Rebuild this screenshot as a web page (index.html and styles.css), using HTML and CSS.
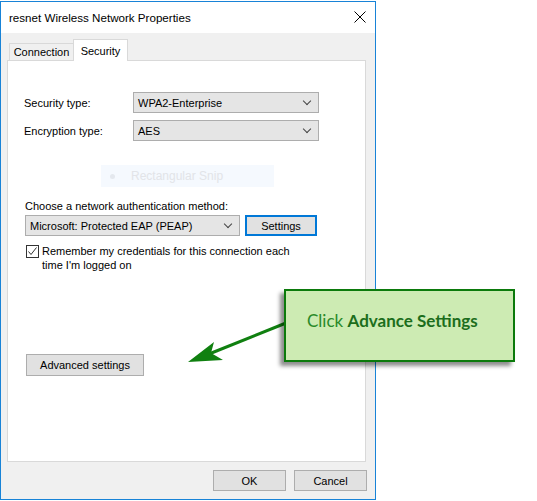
FILE: index.html
```html
<!DOCTYPE html>
<html lang="en">
<head>
<meta charset="UTF-8" />
<meta name="viewport" content="width=device-width, initial-scale=1" />
<title>resnet Wireless Network Properties</title>
<link rel="stylesheet" href="styles.css">
</head>
<body>

<div class="window">
  <div class="titlebar">
    <span class="title">resnet Wireless Network Properties</span>
    <svg class="close" width="12" height="12" viewBox="0 0 12 12">
      <path d="M0.5 0.5 L11.5 11.5 M11.5 0.5 L0.5 11.5" stroke="#000" stroke-width="1" fill="none" />
    </svg>
  </div>

  <div class="dialog">
    <div class="tabs">
      <div class="tab">Connection</div>
      <div class="tab active">Security</div>
    </div>

    <div class="panel">
      <div class="field">
        <label class="field-label">Security type:</label>
        <div class="combo wide"><span>WPA2-Enterprise</span><span class="chev"></span></div>
      </div>
      <div class="field second">
        <label class="field-label">Encryption type:</label>
        <div class="combo wide"><span>AES</span><span class="chev"></span></div>
      </div>

      <div class="snip-ghost">
        <span class="snip-dot"></span>
        <span>Rectangular Snip</span>
      </div>

      <div class="auth">
        <div class="auth-label">Choose a network authentication method:</div>
        <div class="auth-row">
          <div class="combo method"><span>Microsoft: Protected EAP (PEAP)</span><span class="chev"></span></div>
          <button class="btn focused">Settings</button>
        </div>
        <div class="check-row">
          <span class="checkbox">
            <svg width="11" height="11" viewBox="0 0 11 11">
              <path d="M1.5 5.5 L4 8.5 L9.5 1.5" stroke="#333" stroke-width="1" fill="none" />
            </svg>
          </span>
          <span class="check-text">Remember my credentials for this connection each<br>time I'm logged on</span>
        </div>
      </div>

      <button class="btn advanced">Advanced settings</button>
    </div>

    <div class="footer">
      <button class="btn footer-btn">OK</button>
      <button class="btn footer-btn">Cancel</button>
    </div>
  </div>
</div>

<svg class="arrow" width="537" height="501" viewBox="0 0 537 501">
  <line x1="286" y1="323" x2="209" y2="354" stroke="#108010" stroke-width="3" />
  <path d="M188 362 L214 342 L211 353 L223 360 Z" fill="#108010" />
</svg>

<div class="callout">
  Click <b>Advance Settings</b>
</div>

</body>
</html>
```

FILE: styles.css
```css
body {
  margin: 0;
  padding: 1px 0 0 0;
  background: #ffffff;
  font-family: 'Liberation Sans', Arial, sans-serif;
  font-size: 11px;
  color: #000;
  width: 537px;
  height: 500px;
  position: relative;
  overflow: hidden;
}
.window {
  width: 374px;
  height: 497px;
  border: 1px solid #1883d7;
  background: #f0f0f0;
  display: flex;
  flex-direction: column;
}
.titlebar {
  flex: none;
  height: 31px;
  background: #ffffff;
  display: flex;
  align-items: center;
  justify-content: space-between;
  padding: 0 9px 0 8px;
}
.title {
  font-size: 11.6px;
  margin-top: -1px;
}
.close {
  margin-top: -1px;
}
.dialog {
  flex: 1;
  display: flex;
  flex-direction: column;
  padding: 0 9px 0 6px;
}
.tabs {
  flex: none;
  height: 27px;
  display: flex;
  align-items: flex-end;
  padding-left: 2px;
}
.tab {
  height: 16px;
  width: 63px;
  border: 1px solid #d9d9d9;
  border-right: none;
  border-bottom: none;
  display: flex;
  align-items: center;
  justify-content: center;
  background: #f0f0f0;
}
.tab.active {
  height: 21px;
  width: 53px;
  border-right: 1px solid #d9d9d9;
  background: #ffffff;
  margin-bottom: -1px;
  position: relative;
  z-index: 1;
}
.panel {
  flex: none;
  box-sizing: border-box;
  height: 402px;
  border: 1px solid #d9d9d9;
  background: #ffffff;
  padding: 31px 0 0 0;
}
.field {
  display: flex;
  align-items: center;
  padding-left: 16px;
}
.field.second {
  margin-top: 7px;
}
.field-label {
  width: 109px;
}
.combo {
  height: 19px;
  border: 1px solid #adadad;
  background: #e5e5e5;
  display: flex;
  align-items: center;
  justify-content: space-between;
  padding: 0 0 0 4px;
}
.combo.wide {
  width: 180px;
}
.chev {
  width: 5px;
  height: 5px;
  border-right: 1px solid #444;
  border-bottom: 1px solid #444;
  transform: rotate(45deg);
  margin: -4px 8px 0 0;
}
.snip-ghost {
  margin: 24px 0 0 93px;
  width: 173px;
  height: 22px;
  background: #f5f9fe;
  display: flex;
  align-items: center;
  color: #e2e4e8;
  font-size: 12px;
}
.snip-dot {
  width: 5px;
  height: 5px;
  border-radius: 50%;
  background: #e4e8ee;
  margin: 0 16px 0 9px;
}
.auth {
  padding-left: 17px;
  margin-top: 12px;
}
.auth-label {
  line-height: 15px;
}
.auth-row {
  display: flex;
  margin-top: 1px;
  gap: 5px;
}
.combo.method {
  width: 209px;
}
.btn {
  font-family: 'Liberation Sans', Arial, sans-serif;
  font-size: 11px;
  color: #000;
  background: #e1e1e1;
  border: 1px solid #adadad;
  padding: 0;
  margin: 0;
  display: flex;
  align-items: center;
  justify-content: center;
}
.btn.focused {
  width: 72px;
  height: 21px;
  border: 2px solid #0078d7;
}
.check-row {
  display: flex;
  margin-top: 8px;
  padding-left: 1px;
}
.checkbox {
  width: 11px;
  height: 11px;
  border: 1px solid #333;
  background: #fff;
  margin-top: 1px;
  flex: none;
}
.checkbox svg {
  display: block;
}
.check-text {
  margin-left: 3px;
  line-height: 14px;
}
.advanced {
  width: 118px;
  height: 22px;
  margin: 82px 0 0 18px;
}
.footer {
  flex: 1;
  display: flex;
  justify-content: flex-end;
  align-items: flex-start;
  gap: 8px;
  padding-top: 8px;
  margin-right: -1px;
}
.footer-btn {
  width: 73px;
  height: 21px;
}
.arrow {
  position: absolute;
  left: 0;
  top: 0;
}
.callout {
  position: absolute;
  left: 284px;
  top: 289px;
  width: 206px;
  height: 50px;
  border: 2px solid #0b7a0b;
  background: #cdebb3;
  box-shadow: -4px 4px 4px rgba(0, 0, 0, 0.45);
  padding: 19px 0 0 21px;
  font-family: Lato, 'Open Sans', sans-serif;
  font-size: 17px;
  color: #2a8a2a;
}
.callout b {
  color: #1c6e1c;
  font-weight: 700;
}
```
